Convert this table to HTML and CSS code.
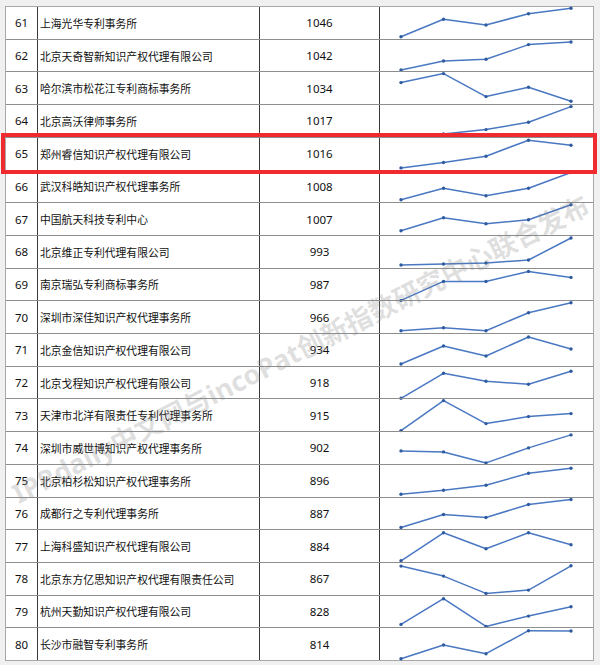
FILE: index.html
```html
<!DOCTYPE html>
<html lang="zh-CN">
<head>
<meta charset="utf-8">
<title>排名</title>
<link rel="stylesheet" href="styles.css">
</head>
<body>
<div class="page">
  <div class="table">
    <div class="row"><div class="c rank">61</div><div class="c name">上海光华专利事务所</div><div class="c val">1046</div><div class="c chart"><svg class="spark"><polyline points="21,29.7 63.5,12.3 106,18 148.5,6.7 191,1.3"/><g><circle cx="21" cy="29.7" r="1.7"/><circle cx="63.5" cy="12.3" r="1.7"/><circle cx="106" cy="18" r="1.7"/><circle cx="148.5" cy="6.7" r="1.7"/><circle cx="191" cy="1.3" r="1.7"/></g></svg></div></div>
    <div class="row"><div class="c rank">62</div><div class="c name">北京天奇智新知识产权代理有限公司</div><div class="c val">1042</div><div class="c chart"><svg class="spark"><polyline points="21,30 63.5,21 106,19.3 148.5,4.6 191,2"/><g><circle cx="21" cy="30" r="1.7"/><circle cx="63.5" cy="21" r="1.7"/><circle cx="106" cy="19.3" r="1.7"/><circle cx="148.5" cy="4.6" r="1.7"/><circle cx="191" cy="2" r="1.7"/></g></svg></div></div>
    <div class="row"><div class="c rank">63</div><div class="c name">哈尔滨市松花江专利商标事务所</div><div class="c val">1034</div><div class="c chart"><svg class="spark"><polyline points="21,10.6 63.5,1.6 106,24.6 148.5,15.3 191,29.3"/><g><circle cx="21" cy="10.6" r="1.7"/><circle cx="63.5" cy="1.6" r="1.7"/><circle cx="106" cy="24.6" r="1.7"/><circle cx="148.5" cy="15.3" r="1.7"/><circle cx="191" cy="29.3" r="1.7"/></g></svg></div></div>
    <div class="row"><div class="c rank">64</div><div class="c name">北京高沃律师事务所</div><div class="c val">1017</div><div class="c chart"><svg class="spark"><polyline points="21,30.9 63.5,28.9 106,24.6 148.5,17.2 191,1.6"/><g><circle cx="21" cy="30.9" r="1.7"/><circle cx="63.5" cy="28.9" r="1.7"/><circle cx="106" cy="24.6" r="1.7"/><circle cx="148.5" cy="17.2" r="1.7"/><circle cx="191" cy="1.6" r="1.7"/></g></svg></div></div>
    <div class="row"><div class="c rank">65</div><div class="c name">郑州睿信知识产权代理有限公司</div><div class="c val">1016</div><div class="c chart"><svg class="spark"><polyline points="21,29.9 63.5,24.5 106,18.2 148.5,2.2 191,7.2"/><g><circle cx="21" cy="29.9" r="1.7"/><circle cx="63.5" cy="24.5" r="1.7"/><circle cx="106" cy="18.2" r="1.7"/><circle cx="148.5" cy="2.2" r="1.7"/><circle cx="191" cy="7.2" r="1.7"/></g></svg></div></div>
    <div class="row"><div class="c rank">66</div><div class="c name">武汉科皓知识产权代理事务所</div><div class="c val">1008</div><div class="c chart"><svg class="spark"><polyline points="21,28.8 63.5,17.2 106,24.8 148.5,17.2 191,1.5"/><g><circle cx="21" cy="28.8" r="1.7"/><circle cx="63.5" cy="17.2" r="1.7"/><circle cx="106" cy="24.8" r="1.7"/><circle cx="148.5" cy="17.2" r="1.7"/><circle cx="191" cy="1.5" r="1.7"/></g></svg></div></div>
    <div class="row"><div class="c rank">67</div><div class="c name">中国航天科技专利中心</div><div class="c val">1007</div><div class="c chart"><svg class="spark"><polyline points="21,27.8 63.5,14.8 106,20.8 148.5,16.8 191,1.8"/><g><circle cx="21" cy="27.8" r="1.7"/><circle cx="63.5" cy="14.8" r="1.7"/><circle cx="106" cy="20.8" r="1.7"/><circle cx="148.5" cy="16.8" r="1.7"/><circle cx="191" cy="1.8" r="1.7"/></g></svg></div></div>
    <div class="row"><div class="c rank">68</div><div class="c name">北京维正专利代理有限公司</div><div class="c val">993</div><div class="c chart"><svg class="spark"><polyline points="21,29 63.5,28 106,27 148.5,24 191,2"/><g><circle cx="21" cy="29" r="1.7"/><circle cx="63.5" cy="28" r="1.7"/><circle cx="106" cy="27" r="1.7"/><circle cx="148.5" cy="24" r="1.7"/><circle cx="191" cy="2" r="1.7"/></g></svg></div></div>
    <div class="row"><div class="c rank">69</div><div class="c name">南京瑞弘专利商标事务所</div><div class="c val">987</div><div class="c chart"><svg class="spark"><polyline points="21,31.4 63.5,12.4 106,12.4 148.5,2.4 191,8.4"/><g><circle cx="21" cy="31.4" r="1.7"/><circle cx="63.5" cy="12.4" r="1.7"/><circle cx="106" cy="12.4" r="1.7"/><circle cx="148.5" cy="2.4" r="1.7"/><circle cx="191" cy="8.4" r="1.7"/></g></svg></div></div>
    <div class="row"><div class="c rank">70</div><div class="c name">深圳市深佳知识产权代理事务所</div><div class="c val">966</div><div class="c chart"><svg class="spark"><polyline points="21,29.7 63.5,26.7 106,29.7 148.5,11.7 191,1.7"/><g><circle cx="21" cy="29.7" r="1.7"/><circle cx="63.5" cy="26.7" r="1.7"/><circle cx="106" cy="29.7" r="1.7"/><circle cx="148.5" cy="11.7" r="1.7"/><circle cx="191" cy="1.7" r="1.7"/></g></svg></div></div>
    <div class="row"><div class="c rank">71</div><div class="c name">北京金信知识产权代理有限公司</div><div class="c val">934</div><div class="c chart"><svg class="spark"><polyline points="21,30 63.5,12 106,22 148.5,3 191,15"/><g><circle cx="21" cy="30" r="1.7"/><circle cx="63.5" cy="12" r="1.7"/><circle cx="106" cy="22" r="1.7"/><circle cx="148.5" cy="3" r="1.7"/><circle cx="191" cy="15" r="1.7"/></g></svg></div></div>
    <div class="row"><div class="c rank">72</div><div class="c name">北京戈程知识产权代理有限公司</div><div class="c val">918</div><div class="c chart"><svg class="spark"><polyline points="21,31.3 63.5,6.3 106,14.3 148.5,17.3 191,4.3"/><g><circle cx="21" cy="31.3" r="1.7"/><circle cx="63.5" cy="6.3" r="1.7"/><circle cx="106" cy="14.3" r="1.7"/><circle cx="148.5" cy="17.3" r="1.7"/><circle cx="191" cy="4.3" r="1.7"/></g></svg></div></div>
    <div class="row"><div class="c rank">73</div><div class="c name">天津市北洋有限责任专利代理事务所</div><div class="c val">915</div><div class="c chart"><svg class="spark"><polyline points="21,31.6 63.5,1.6 106,24.6 148.5,17.6 191,14.6"/><g><circle cx="21" cy="31.6" r="1.7"/><circle cx="63.5" cy="1.6" r="1.7"/><circle cx="106" cy="24.6" r="1.7"/><circle cx="148.5" cy="17.6" r="1.7"/><circle cx="191" cy="14.6" r="1.7"/></g></svg></div></div>
    <div class="row"><div class="c rank">74</div><div class="c name">深圳市威世博知识产权代理事务所</div><div class="c val">902</div><div class="c chart"><svg class="spark"><polyline points="21,18.9 63.5,19.9 106,30.9 148.5,15.9 191,2.9"/><g><circle cx="21" cy="18.9" r="1.7"/><circle cx="63.5" cy="19.9" r="1.7"/><circle cx="106" cy="30.9" r="1.7"/><circle cx="148.5" cy="15.9" r="1.7"/><circle cx="191" cy="2.9" r="1.7"/></g></svg></div></div>
    <div class="row"><div class="c rank">75</div><div class="c name">北京柏杉松知识产权代理事务所</div><div class="c val">896</div><div class="c chart"><svg class="spark"><polyline points="21,29.2 63.5,25.2 106,20.2 148.5,8.2 191,3.2"/><g><circle cx="21" cy="29.2" r="1.7"/><circle cx="63.5" cy="25.2" r="1.7"/><circle cx="106" cy="20.2" r="1.7"/><circle cx="148.5" cy="8.2" r="1.7"/><circle cx="191" cy="3.2" r="1.7"/></g></svg></div></div>
    <div class="row"><div class="c rank">76</div><div class="c name">成都行之专利代理事务所</div><div class="c val">887</div><div class="c chart"><svg class="spark"><polyline points="21,29.5 63.5,16.5 106,19.5 148.5,6.5 191,1.5"/><g><circle cx="21" cy="29.5" r="1.7"/><circle cx="63.5" cy="16.5" r="1.7"/><circle cx="106" cy="19.5" r="1.7"/><circle cx="148.5" cy="6.5" r="1.7"/><circle cx="191" cy="1.5" r="1.7"/></g></svg></div></div>
    <div class="row"><div class="c rank">77</div><div class="c name">上海科盛知识产权代理有限公司</div><div class="c val">884</div><div class="c chart"><svg class="spark"><polyline points="21,30.8 63.5,2.8 106,18.8 148.5,2.8 191,14.8"/><g><circle cx="21" cy="30.8" r="1.7"/><circle cx="63.5" cy="2.8" r="1.7"/><circle cx="106" cy="18.8" r="1.7"/><circle cx="148.5" cy="2.8" r="1.7"/><circle cx="191" cy="14.8" r="1.7"/></g></svg></div></div>
    <div class="row"><div class="c rank">78</div><div class="c name">北京东方亿思知识产权代理有限责任公司</div><div class="c val">867</div><div class="c chart"><svg class="spark"><polyline points="21,3.1 63.5,13.1 106,30.4 148.5,27.1 191,2.8"/><g><circle cx="21" cy="3.1" r="1.7"/><circle cx="63.5" cy="13.1" r="1.7"/><circle cx="106" cy="30.4" r="1.7"/><circle cx="148.5" cy="27.1" r="1.7"/><circle cx="191" cy="2.8" r="1.7"/></g></svg></div></div>
    <div class="row"><div class="c rank">79</div><div class="c name">杭州天勤知识产权代理有限公司</div><div class="c val">828</div><div class="c chart"><svg class="spark"><polyline points="21,28.4 63.5,2.7 106,30.4 148.5,20.1 191,10.7"/><g><circle cx="21" cy="28.4" r="1.7"/><circle cx="63.5" cy="2.7" r="1.7"/><circle cx="106" cy="30.4" r="1.7"/><circle cx="148.5" cy="20.1" r="1.7"/><circle cx="191" cy="10.7" r="1.7"/></g></svg></div></div>
    <div class="row"><div class="c rank">80</div><div class="c name">长沙市融智专利事务所</div><div class="c val">814</div><div class="c chart"><svg class="spark"><polyline points="21,30.7 63.5,17 106,25.7 148.5,2.7 191,3"/><g><circle cx="21" cy="30.7" r="1.7"/><circle cx="63.5" cy="17" r="1.7"/><circle cx="106" cy="25.7" r="1.7"/><circle cx="148.5" cy="2.7" r="1.7"/><circle cx="191" cy="3" r="1.7"/></g></svg></div></div>
  </div>
  <div class="highlight"></div>
  <div class="watermark">IPRdaily中文网与incoPat创新指数研究中心联合发布</div>
</div>
</body>
</html>
```

FILE: styles.css
```css
html, body {
  margin: 0;
  padding: 0;
  background: #f0f0f0;
}
body {
  width: 600px;
  height: 665px;
  overflow: hidden;
  font-family: "Noto Sans", "Noto Sans CJK SC", sans-serif;
  color: #111;
}
.page {
  position: relative;
  width: 600px;
  height: 665px;
  padding: 6px 0 0 5px;
  box-sizing: border-box;
}
.table {
  width: 589px;
  height: 655px;
  box-sizing: border-box;
  background: #fff;
  border-left: 1px solid #a8a8a8;
  border-right: 1px solid #a8a8a8;
  border-bottom: 1px solid #a8a8a8;
  display: grid;
  grid-template-rows: repeat(20, 1fr);
}
.row {
  display: grid;
  grid-template-columns: 31px 222px 120px 214px;
  border-top: 1px solid #8e8e8e;
  min-height: 0;
}
.row:first-child {
  border-top-color: #a8a8a8;
}
.c {
  display: flex;
  align-items: center;
  min-width: 0;
  min-height: 0;
}
.c + .c {
  border-left: 1px solid #3a3a3a;
}
.rank {
  justify-content: center;
  font-size: 11.5px;
}
.name {
  padding-left: 2px;
  font-family: "Noto Sans CJK SC", sans-serif;
  font-size: 10.8px;
  white-space: nowrap;
}
.val {
  justify-content: center;
  font-size: 11.5px;
}
.chart {
  align-items: stretch;
}
.spark {
  width: 213px;
  height: 100%;
  overflow: visible;
  display: block;
}
.spark polyline {
  fill: none;
  stroke: #4a78c2;
  stroke-width: 1.5;
  stroke-linejoin: round;
}
.spark circle {
  fill: #2f5b9f;
}
.highlight {
  position: absolute;
  left: 1px;
  top: 133px;
  width: 596px;
  height: 41px;
  box-sizing: border-box;
  border: 4px solid #ef2b2f;
}
.watermark {
  position: absolute;
  left: 300px;
  top: 348px;
  transform: translate(-50%, -50%) rotate(-27deg);
  white-space: nowrap;
  font-family: "Noto Sans", "Noto Sans CJK SC", sans-serif;
  font-weight: 700;
  font-size: 27px;
  color: rgba(130, 130, 130, 0.26);
  pointer-events: none;
}
```
